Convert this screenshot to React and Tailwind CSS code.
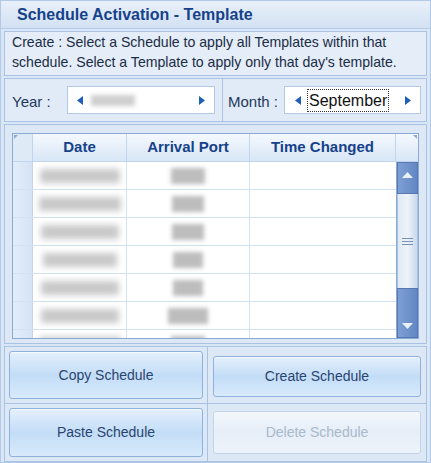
import React from 'react';

const rows = [
    { date: 80, port: 34 },
    { date: 82, port: 32 },
    { date: 78, port: 32 },
    { date: 74, port: 30 },
    { date: 78, port: 30 },
    { date: 78, port: 40 },
    { date: 82, port: 34 },
];

function Arrow({ dir }) {
    // small WinForms spinner triangles
    return (
        <svg width="6" height="9" viewBox="0 0 6 9" className="shrink-0">
            {dir === 'left'
                ? <path d="M6 0 L0 4.5 L6 9 Z" fill="#1f5fb8" />
                : <path d="M0 0 L6 4.5 L0 9 Z" fill="#1f5fb8" />}
        </svg>
    );
}

function SchedButton({ label, disabled, className }) {
    return (
        <button
            className={
                'w-full rounded-[3px] border text-[14px] ' +
                (disabled
                    ? 'border-[#c4d4e8] bg-gradient-to-b from-[#f3f7fc] via-[#e6eef8] to-[#edf3fa] text-[#a9b8cb]'
                    : 'border-[#8fb1de] bg-gradient-to-b from-[#e4f0fc] via-[#c3ddf7] to-[#d8eafb] text-[#2a4470] shadow-[inset_0_1px_0_#f4f9ff]') +
                ' ' + className
            }
        >
            {label}
        </button>
    );
}

export default function App() {
    return (
        <div className="w-[431px] h-[463px] bg-[#d9e6f5] border border-[#b3c9e6] flex flex-col font-['Liberation_Sans',Arial,sans-serif] text-[#1e395b] overflow-hidden">
            {/* Titel */}
            <div className="h-[28px] shrink-0 flex items-center pl-[16px] bg-gradient-to-b from-[#e8f0fa] to-[#d3e1f3] border-b border-[#b8cde8]">
                <span className="text-[16px] font-bold text-[#15428b]">Schedule Activation - Template</span>
            </div>

            <div className="flex flex-col gap-[2px] px-[3px] pt-[2px]">
                {/* Beschreibung */}
                <div className="h-[45px] border border-[#aac3e3] bg-[#e4edf8] px-[7px] pt-0 text-[14.1px] leading-[20px] text-[#1b2c45] whitespace-nowrap">
                    <p>Create : Select a Schedule to apply all Templates within that</p>
                    <p>schedule. Select a Template to apply only that day's template.</p>
                </div>

                {/* Jahr / Monat */}
                <div className="h-[44px] flex">
                    <div className="w-[219px] border border-[#aac3e3] bg-[#e1ebf7] flex items-center pl-[7px] pr-[7px]">
                        <span className="text-[15px] w-[55px] mt-[5px]">Year :</span>
                        <div className="h-[28px] flex-1 bg-white border border-[#b4c8e3] flex items-center px-[9px]">
                            <Arrow dir="left" />
                            <div className="ml-[8px] w-[44px] h-[11px] bg-[#cfcfcf] blur-[2px]" />
                            <div className="flex-1" />
                            <Arrow dir="right" />
                        </div>
                    </div>
                    <div className="flex-1 border border-l-0 border-[#aac3e3] bg-[#e1ebf7] flex items-center pl-[5px] pr-[5px]">
                        <span className="text-[15px] w-[56px] mt-[5px]">Month :</span>
                        <div className="h-[28px] flex-1 bg-white border border-[#b4c8e3] flex items-center pl-[10px] pr-[9px]">
                            <Arrow dir="left" />
                            <span className="ml-[6px] border border-dotted border-[#333] px-[1px] h-[23px] leading-[21px] text-[16px] text-[#111]">September</span>
                            <div className="flex-1" />
                            <Arrow dir="right" />
                        </div>
                    </div>
                </div>

                {/* Raster */}
                <div className="h-[220px] border border-[#aac3e3] bg-[#dce8f6] pl-[7px] pr-[7px] pt-[8px]">
                    <div className="h-[206px] border border-[#8ba9d3] bg-white flex flex-col overflow-hidden">
                        <div className="h-[28px] shrink-0 flex bg-gradient-to-b from-[#f5f9fe] to-[#d8e6f6] border-b border-[#c2d5ee] text-[15px] font-bold text-[#15428b]">
                            <div className="w-[20px] relative border-r border-[#c2d5ee] bg-[#dfeaf7]">
                                <div className="absolute left-[1px] top-[1px] w-0 h-0 border-t-[4px] border-r-[4px] border-t-[#8ba9d3] border-r-transparent" />
                            </div>
                            <div className="w-[94px] border-r border-[#c2d5ee] flex items-center justify-center">Date</div>
                            <div className="w-[123px] border-r border-[#c2d5ee] flex items-center justify-center">Arrival Port</div>
                            <div className="w-[146px] border-r border-[#c2d5ee] flex items-center justify-center">Time Changed</div>
                            <div className="flex-1 relative">
                                <div className="absolute right-[1px] top-[1px] w-0 h-0 border-t-[4px] border-l-[4px] border-t-[#8ba9d3] border-l-transparent" />
                            </div>
                        </div>
                        <div className="flex flex-1 overflow-hidden">
                            <div className="flex flex-col w-[383px]">
                                {rows.map((r, i) => (
                                    <div key={i} className="h-[28px] shrink-0 flex border-b border-[#d3e2f3]">
                                        <div className="w-[20px] border-r border-[#c2d5ee] bg-gradient-to-r from-[#e3edf9] to-[#d5e3f4]" />
                                        <div className="w-[94px] border-r border-[#d3e2f3] flex items-center justify-center">
                                            <div className="h-[14px] bg-[#c9c9c9] blur-[3px]" style={{ width: r.date }} />
                                        </div>
                                        <div className="w-[123px] border-r border-[#d3e2f3] flex items-center justify-center">
                                            <div className="h-[16px] bg-[#bdbdbd] blur-[2px]" style={{ width: r.port }} />
                                        </div>
                                        <div className="flex-1" />
                                    </div>
                                ))}
                            </div>
                            {/* Bildlaufleiste */}
                            <div className="flex-1 flex flex-col border-l border-[#8ba9d3]">
                                <div className="h-[32px] bg-gradient-to-r from-[#7d9fd4] to-[#6387c4] border border-[#5677b0] flex justify-center pt-[9px]">
                                    <svg width="11" height="6" viewBox="0 0 11 6"><path d="M0 6 L5.5 0 L11 6 Z" fill="#e8f0fb" /></svg>
                                </div>
                                <div className="h-[94px] bg-gradient-to-r from-[#dfe8f4] via-[#eef3fa] to-[#c9d8ec] border-x border-[#aec3e0] flex flex-col items-center justify-center gap-[2px]">
                                    <div className="w-[11px] h-px bg-[#7a92b6]" />
                                    <div className="w-[11px] h-px bg-[#7a92b6]" />
                                    <div className="w-[11px] h-px bg-[#7a92b6]" />
                                </div>
                                <div className="flex-1 bg-gradient-to-r from-[#7d9fd4] to-[#6387c4] border border-[#5677b0] flex items-end justify-center pb-[8px]">
                                    <svg width="11" height="6" viewBox="0 0 11 6"><path d="M0 0 L11 0 L5.5 6 Z" fill="#e8f0fb" /></svg>
                                </div>
                            </div>
                        </div>
                    </div>
                </div>

                {/* Schaltflächen */}
                <div className="grid grid-cols-[203px_1fr] grid-rows-[57px_57px] border border-[#aac3e3] bg-[#dce8f6]">
                    <div className="p-[4px] border-r border-b border-[#aac3e3]">
                        <SchedButton label="Copy Schedule" className="h-full" />
                    </div>
                    <div className="px-[5px] pt-[9px] pb-[6px] border-b border-[#aac3e3]">
                        <SchedButton label="Create Schedule" className="h-full" />
                    </div>
                    <div className="p-[4px] border-r border-[#aac3e3]">
                        <SchedButton label="Paste Schedule" className="h-full" />
                    </div>
                    <div className="px-[5px] pt-[7px] pb-[7px]">
                        <SchedButton label="Delete Schedule" disabled className="h-full" />
                    </div>
                </div>
            </div>
        </div>
    );
}
